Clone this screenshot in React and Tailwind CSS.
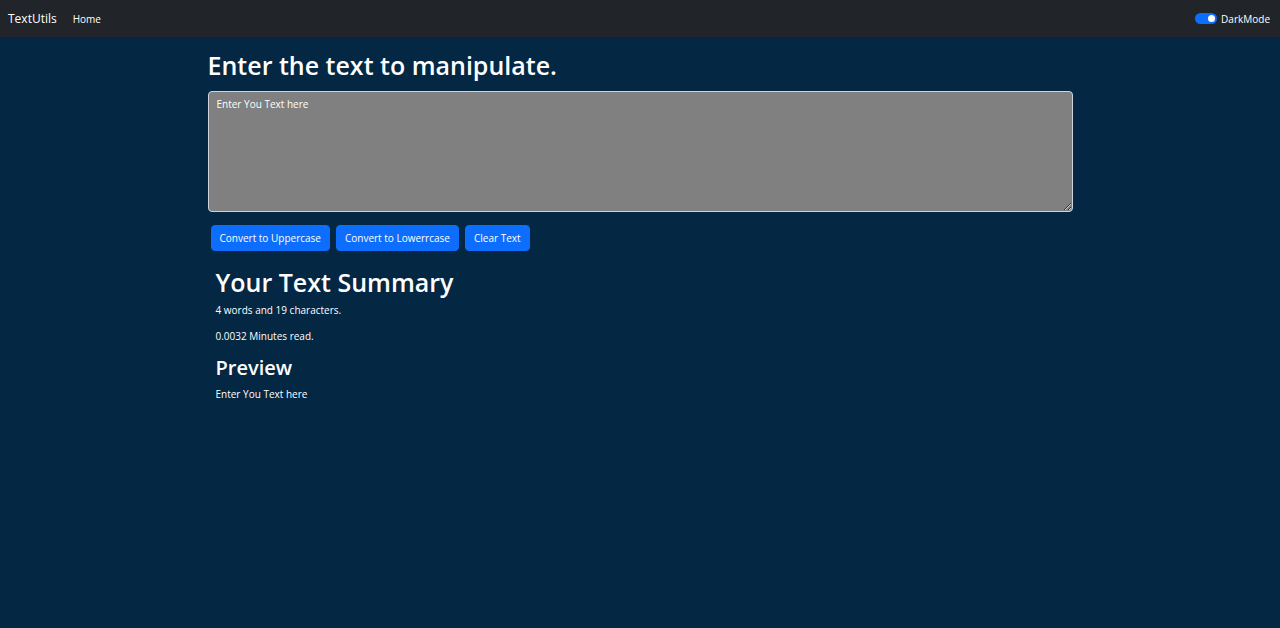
import { useState } from "react";

const buttonClass =
  "rounded border border-[#0d6efd] bg-[#0d6efd] h-[26px] px-2 leading-4 text-white cursor-pointer hover:bg-[#0b5ed7]";

function Navbar({ dark, onToggle }) {
  return (
    <nav className="flex items-center justify-between bg-[#212529] h-[37px] pl-2 pr-[10px] text-white">
      <div className="flex items-center gap-4">
        <a href="#" className="text-[12px] leading-5">TextUtils</a>
        <a href="#" className="leading-4">Home</a>
      </div>
      <div className="flex items-center">
        <input
          id="dark-mode"
          type="checkbox"
          role="switch"
          checked={dark}
          onChange={onToggle}
          className="sr-only"
        />
        <label htmlFor="dark-mode" className="flex items-center gap-1 cursor-pointer">
          <span
            className={
              dark
                ? "flex h-[11px] w-[22px] items-center justify-end rounded-full bg-[#0d6efd] px-[2px]"
                : "flex h-[11px] w-[22px] items-center justify-start rounded-full bg-gray-400 px-[2px]"
            }
          >
            <span className="size-[7px] rounded-full bg-white" />
          </span>
          <span className="leading-4">DarkMode</span>
        </label>
      </div>
    </nav>
  );
}

export default function App() {
  const [dark, setDark] = useState(true);
  const [text, setText] = useState("Enter You Text here");
  const words = text.split(/\s+/).filter(Boolean).length;

  return (
    <div
      className={
        dark
          ? "min-h-screen bg-[#042743] text-white text-[10px] font-['Open_Sans',sans-serif]"
          : "min-h-screen bg-white text-[#042743] text-[10px] font-['Open_Sans',sans-serif]"
      }
    >
      <Navbar dark={dark} onToggle={() => setDark(!dark)} />
      <main className="mx-auto max-w-[881px] px-2 pt-3">
        <h1 className="mb-[10px] text-[25px] leading-8 font-semibold">
          <label htmlFor="text-box">Enter the text to manipulate.</label>
        </h1>
        <textarea
          id="text-box"
          rows={8}
          value={text}
          onChange={(e) => setText(e.target.value)}
          className={
            dark
              ? "block h-[121px] w-full resize-y rounded border border-[#ced4da] bg-[#808080] px-2 py-1 leading-4 text-white"
              : "block h-[121px] w-full resize-y rounded border border-[#ced4da] bg-white px-2 py-1 leading-4 text-[#042743]"
          }
        />
        <div className="mt-[13px] flex flex-wrap gap-[6px] px-[3px]">
          <button type="button" className={buttonClass} onClick={() => setText(text.toUpperCase())}>
            Convert to Uppercase
          </button>
          <button type="button" className={buttonClass} onClick={() => setText(text.toLowerCase())}>
            Convert to Lowerrcase
          </button>
          <button type="button" className={buttonClass} onClick={() => setText("")}>
            Clear Text
          </button>
        </div>
        <section className="mt-[15px] px-2">
          <h1 className="mb-1 text-[25px] leading-8 font-semibold">Your Text Summary</h1>
          <p className="mb-[10px] leading-4">
            {words} words and {text.length} characters.
          </p>
          <p className="mb-[10px] leading-4">{0.0008 * words} Minutes read.</p>
          <h2 className="mb-1 text-[20px] leading-7 font-semibold">Preview</h2>
          <p className="leading-4">{text}</p>
        </section>
      </main>
    </div>
  );
}
